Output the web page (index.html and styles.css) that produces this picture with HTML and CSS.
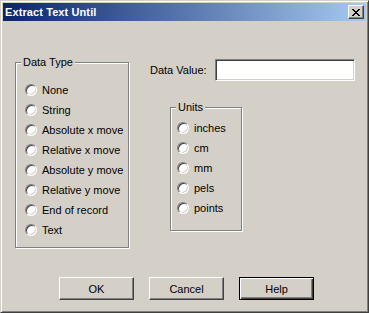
FILE: index.html
```html
<!DOCTYPE html>
<html lang="en">
<head>
    <meta charset="UTF-8">
    <title>Extract Text Until</title>
    <link rel="stylesheet" href="styles.css">
</head>
<body>
    <div class="window">
        <div class="titlebar">
            <span class="title">Extract Text Until</span>
            <button class="close-btn" aria-label="Close">
                <svg width="8" height="7" viewBox="0 0 8 7" shape-rendering="crispEdges">
                    <path d="M0 0h2v1h-2z M6 0h2v1h-2z M1 1h2v1h-2z M5 1h2v1h-2z M2 2h4v1h-4z M3 3h2v1h-2z M2 4h4v1h-4z M1 5h2v1h-2z M5 5h2v1h-2z M0 6h2v1h-2z M6 6h2v1h-2z" fill="#000"/>
                </svg>
            </button>
        </div>
        <div class="client">
            <div class="main">
                <fieldset class="group data-type">
                    <legend>Data Type</legend>
                    <label class="opt"><input type="radio" name="dtype"> None</label>
                    <label class="opt"><input type="radio" name="dtype"> String</label>
                    <label class="opt"><input type="radio" name="dtype"> Absolute x move</label>
                    <label class="opt"><input type="radio" name="dtype"> Relative x move</label>
                    <label class="opt"><input type="radio" name="dtype"> Absolute y move</label>
                    <label class="opt"><input type="radio" name="dtype"> Relative y move</label>
                    <label class="opt"><input type="radio" name="dtype"> End of record</label>
                    <label class="opt"><input type="radio" name="dtype"> Text</label>
                </fieldset>
                <div class="right">
                    <div class="value-row">
                        <label for="dataValue" class="value-label">Data Value:</label>
                        <input type="text" id="dataValue" class="value-input">
                    </div>
                    <fieldset class="group units">
                        <legend>Units</legend>
                        <label class="opt"><input type="radio" name="units"> inches</label>
                        <label class="opt"><input type="radio" name="units"> cm</label>
                        <label class="opt"><input type="radio" name="units"> mm</label>
                        <label class="opt"><input type="radio" name="units"> pels</label>
                        <label class="opt"><input type="radio" name="units"> points</label>
                    </fieldset>
                </div>
            </div>
            <div class="buttons">
                <button class="btn">OK</button>
                <button class="btn">Cancel</button>
                <button class="btn default">Help</button>
            </div>
        </div>
    </div>
</body>
</html>
```

FILE: styles.css
```css
/* classic dialog */
body {
    margin: 0;
    font-family: "Liberation Sans", Arial, sans-serif;
    font-size: 11px;
    color: #000;
    background: #d4d0c8;
}

.window {
    width: 369px;
    height: 313px;
    box-sizing: border-box;
    display: flex;
    flex-direction: column;
    padding: 2px;
    background: #d4d0c8;
    border: 1px solid;
    border-color: #d4d0c8 #404040 #404040 #d4d0c8;
    box-shadow: inset 1px 1px 0 #fff, inset -1px -1px 0 #808080;
}

.titlebar {
    height: 18px;
    display: flex;
    align-items: center;
    justify-content: space-between;
    padding: 0 2px 0 2px;
    background: linear-gradient(90deg, #0a246a, #a6caf0);
}

.title {
    color: #fff;
    font-weight: 700;
    font-size: 11px;
    letter-spacing: 0.1px;
}

.close-btn {
    width: 16px;
    height: 14px;
    box-sizing: border-box;
    padding: 0;
    margin: 0;
    display: flex;
    align-items: center;
    justify-content: center;
    background: #d4d0c8;
    border: 1px solid;
    border-color: #fff #404040 #404040 #fff;
    box-shadow: inset -1px -1px 0 #808080;
}

.client {
    flex: 1;
    display: flex;
    flex-direction: column;
    padding: 35px 0 10px 12px;
}

.main {
    display: flex;
    align-items: flex-start;
}

.group {
    margin: 0;
    min-width: 0;
    box-sizing: border-box;
    border: 1px solid #808080;
    box-shadow: 1px 1px 0 #fff, inset 1px 1px 0 #fff;
}

.group legend {
    padding: 0 2px;
    line-height: 13px;
    background: #d4d0c8;
}

.data-type {
    width: 114px;
    padding: 11px 0 7px 9px;
}

.data-type legend {
    margin-left: -4px;
}

.opt {
    display: flex;
    align-items: center;
    gap: 5px;
    height: 20px;
    white-space: nowrap;
}

.opt input {
    appearance: none;
    -webkit-appearance: none;
    width: 12px;
    height: 12px;
    margin: 0;
    box-sizing: border-box;
    border-radius: 50%;
    background: #fff;
    border: 1px solid;
    border-color: #808080 #fff #fff #808080;
    box-shadow: inset 1px 1px 0 #404040, inset -1px -1px 0 #d4d0c8;
}

.right {
    margin-left: 21px;
    margin-top: 3px;
}

.value-row {
    display: flex;
    align-items: center;
}

.value-label {
    width: 65px;
}

.value-input {
    width: 140px;
    height: 22px;
    box-sizing: border-box;
    margin: 0;
    padding: 2px 3px;
    font: inherit;
    background: #fff;
    border: 1px solid;
    border-color: #808080 #fff #fff #808080;
    box-shadow: inset 1px 1px 0 #404040, inset -1px -1px 0 #d4d0c8;
    outline: none;
}

.units {
    width: 72px;
    margin: 20px 0 0 20px;
    padding: 4px 0 12px 6px;
}

.units legend {
    margin-left: -1px;
}

.buttons {
    margin-top: auto;
    display: flex;
    gap: 15px;
    padding-left: 44px;
}

.btn {
    width: 75px;
    height: 23px;
    box-sizing: border-box;
    margin: 0;
    padding: 0;
    font: inherit;
    color: #000;
    background: #d4d0c8;
    border: 1px solid;
    border-color: #fff #404040 #404040 #fff;
    box-shadow: inset -1px -1px 0 #808080;
}

.btn.default {
    border: 1px solid #000;
    box-shadow: inset 1px 1px 0 #fff, inset -1px -1px 0 #404040, inset -2px -2px 0 #808080;
}
```
